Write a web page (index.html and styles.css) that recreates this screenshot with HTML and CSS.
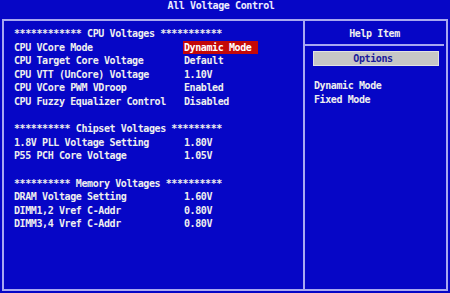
FILE: index.html
```html
<!DOCTYPE html>
<html lang="en">
<head>
  <meta charset="UTF-8" />
  <title>All Voltage Control</title>
  <link rel="stylesheet" href="styles.css">
</head>
<body>
  <div class="title">All Voltage Control</div>

  <div class="frame">
    <div class="main">
      <div class="group-head">************ CPU Voltages ***********</div>
      <div class="row"><span class="label">CPU VCore Mode</span><span class="value selected">Dynamic Mode</span></div>
      <div class="row"><span class="label">CPU Target Core Voltage</span><span class="value">Default</span></div>
      <div class="row"><span class="label">CPU VTT (UnCore) Voltage</span><span class="value">1.10V</span></div>
      <div class="row"><span class="label">CPU VCore PWM VDroop</span><span class="value">Enabled</span></div>
      <div class="row"><span class="label">CPU Fuzzy Equalizer Control</span><span class="value">Disabled</span></div>
      <div class="blank"></div>

      <div class="group-head">********** Chipset Voltages *********</div>
      <div class="row"><span class="label">1.8V PLL Voltage Setting</span><span class="value">1.80V</span></div>
      <div class="row"><span class="label">P55 PCH Core Voltage</span><span class="value">1.05V</span></div>
      <div class="blank"></div>

      <div class="group-head">********** Memory Voltages **********</div>
      <div class="row"><span class="label">DRAM Voltage Setting</span><span class="value">1.60V</span></div>
      <div class="row"><span class="label">DIMM1,2 Vref C-Addr</span><span class="value">0.80V</span></div>
      <div class="row"><span class="label">DIMM3,4 Vref C-Addr</span><span class="value">0.80V</span></div>
    </div>

    <div class="help">
      <div class="help-title">Help Item</div>
      <div class="help-body">
        <div class="options">Options</div>
        <div class="help-text">Dynamic Mode</div>
        <div class="help-text">Fixed Mode</div>
      </div>
    </div>
  </div>
</body>
</html>
```

FILE: styles.css
```css
body {
  margin: 0;
  width: 450px;
  height: 293px;
  overflow: hidden;
  background-color: #0606c6;
  color: #efefef;
  font-family: "DejaVu Sans Mono", "Liberation Mono", monospace;
  font-size: 10px;
  font-weight: bold;
  letter-spacing: -0.4px;
  line-height: 13.6px;
  white-space: nowrap;
}

.title {
  height: 19px;
  line-height: 12px;
  text-align: center;
  padding-right: 8px;
  color: #ececff;
}

/* рамка */
.frame {
  box-sizing: border-box;
  width: 446px;
  height: 272px;
  margin-left: 2px;
  border: 2px solid #a8a8f0;
  display: grid;
  grid-template-columns: 301px 139px;
}

.main {
  padding: 6px 0 0 10px;
  border-right: 2px solid #a8a8f0;
}

.row {
  display: flex;
}

.label {
  width: 170px;
}

.value.selected {
  background-color: #c40808;
  color: #ffffff;
  margin-left: -1px;
  padding: 0 7px 0 1px;
}

.blank {
  height: 13.6px;
}

.help {
  display: flex;
  flex-direction: column;
}

.help-title {
  height: 25px;
  padding-top: 6px;
  box-sizing: border-box;
  text-align: center;
  border-bottom: 2px solid #a8a8f0;
}

.help-body {
  padding: 5px 5px 0 8px;
}

.options {
  box-sizing: border-box;
  height: 15px;
  line-height: 13px;
  background-color: #c6c6c6;
  border: 1px solid #e2e2e2;
  color: #1a1a9a;
  text-align: center;
  padding-right: 6px;
  margin-bottom: 13px;
}

.help-text {
  padding-left: 1px;
}
```
